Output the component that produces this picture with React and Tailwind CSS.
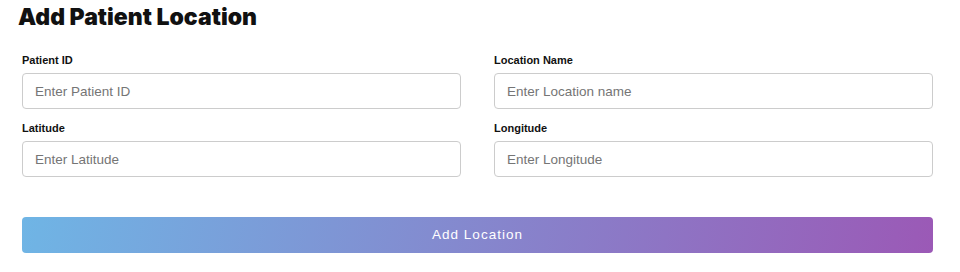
export default function App() {
  const fields = [
    { label: 'Patient ID', placeholder: 'Enter Patient ID' },
    { label: 'Location Name', placeholder: 'Enter Location name' },
    { label: 'Latitude', placeholder: 'Enter Latitude' },
    { label: 'Longitude', placeholder: 'Enter Longitude' },
  ];

  return (
    <div className="w-[960px] h-[272px] bg-white overflow-hidden font-['Liberation_Sans',Arial,sans-serif]">
      <h2 className="pl-[18px] pt-[2px] text-[23px] leading-[30px] font-black tracking-[0px] text-[#111] font-['Inter','Noto_Sans',sans-serif]">
        Add Patient Location
      </h2>
      <form className="pl-[22px] pr-[27px] pt-[21px]" onSubmit={e => e.preventDefault()}>
        <div className="grid grid-cols-2 gap-x-[33px] gap-y-[12px]">
          {fields.map(f => (
            <div key={f.label} className="flex flex-col">
              <label className="text-[11px] leading-[14px] font-bold text-[#111] mb-[6px]">{f.label}</label>
              <input
                className="h-[36px] w-full rounded-[4px] border border-[#cccccc] px-[12px] text-[13.5px] text-[#333] placeholder:text-[#757575] outline-none"
                placeholder={f.placeholder}
              />
            </div>
          ))}
        </div>
        <button
          type="submit"
          className="mt-[40px] h-[36px] w-full rounded-[4px] bg-[linear-gradient(100deg,#6fb5e5,#9b59b6)] pt-[1px] text-[13.5px] tracking-[1px] text-white"
        >
          Add Location
        </button>
      </form>
    </div>
  );
}
